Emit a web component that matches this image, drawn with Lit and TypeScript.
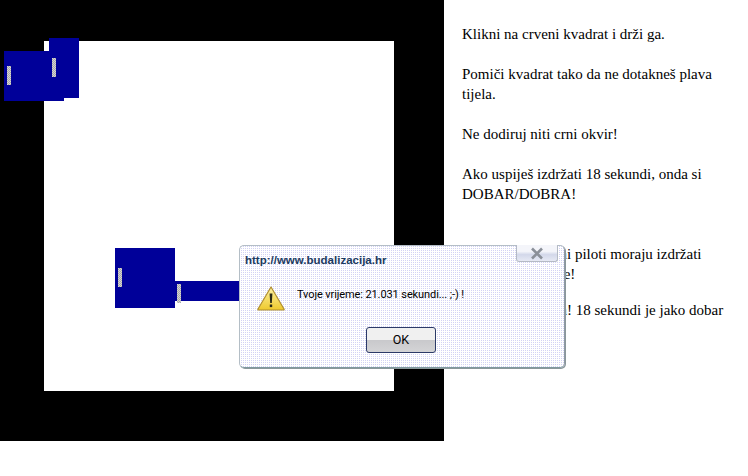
import { LitElement, html, css } from "lit";
import { customElement } from "lit/decorators.js";

@customElement("app-root")
export class AppRoot extends LitElement {
  static styles = css`
    :host { display: block; width: 748px; height: 476px; background: #fff; overflow: hidden; position: relative; }
    .page { display: flex; align-items: flex-start; }
    .arena { position: relative; flex: none; width: 350px; height: 350px; background: #fff; border-style: solid; border-color: #000; border-width: 41px 50px 50px 44px; }
    .block { position: absolute; background: #000099; }
    .handle { position: absolute; width: 4px; height: 19px; background: repeating-conic-gradient(#aaa 0 25%, #d4d4d4 0 50%) 0 0 / 2px 2px; }
    .a { left: -40px; top: 10px; width: 60px; height: 50px; }
    .a .handle { left: 3px; top: 15px; }
    .b { left: 5px; top: -3px; width: 30px; height: 60px; }
    .b .handle { left: 3px; top: 20px; }
    .c { left: 71px; top: 207px; width: 60px; height: 60px; }
    .c .handle { left: 3px; top: 20px; }
    .d { left: 131px; top: 240px; width: 80px; height: 20px; }
    .d .handle { left: 2px; top: 3px; }
    .text { margin: 0; padding: 24px 12px 0 18px; width: 274px; box-sizing: content-box; font: 15px/20px "Liberation Serif", serif; color: #000; }
    .text p { margin: 0 0 20px; }
    .text .gap { margin-top: 40px; }
    .text .last { margin-top: -4px; }
    .dialog { position: absolute; left: 239px; top: 245px; width: 326px; height: 123px; box-sizing: border-box; border: 1px solid #b4bec6; border-bottom-color: #7f9a9e; border-right-color: #8f9aa4; border-radius: 5px; box-shadow: 1px 1px 0 #8b979c; background: repeating-conic-gradient(#d2d2f4 0 25%, #fff 0 100%) 0 0 / 2px 2px; display: flex; flex-direction: column; }
    .title { font: bold 11.5px/14px "Liberation Sans", sans-serif; color: #1b3a5e; padding: 7px 0 0 5px; }
    .close { position: absolute; right: 6px; top: -1px; width: 42px; height: 17px; box-sizing: border-box; border: 1px solid #b4bac4; border-top: none; border-radius: 0 0 3px 3px; background: linear-gradient(#f4f5fa 0 40%, #d3d8ea 60%, #e6e9f4 100%); display: flex; align-items: center; justify-content: center; }
    .body { display: flex; align-items: flex-start; gap: 12px; padding: 19px 0 0 17px; }
    .msg { margin-top: 2px; font: 11px/14px Roboto, sans-serif; letter-spacing: -0.1px; color: #000; }
    .actions { display: flex; justify-content: center; padding: 16px 2px 0 0; }
    .ok { width: 70px; height: 26px; box-sizing: border-box; border: 1px solid #2c3a68; border-radius: 3px; background: linear-gradient(#f0f0f0 0 48%, #c9c9cc 52%, #d4d4d6 100%); font: 12.5px/24px Roboto, sans-serif; color: #000; text-align: center; padding: 0; }
  `;

  render() {
    return html`
      <div class="page">
        <div class="arena">
          <div class="block a"><div class="handle"></div></div>
          <div class="block b"><div class="handle"></div></div>
          <div class="block c"><div class="handle"></div></div>
          <div class="block d"><div class="handle"></div></div>
        </div>
        <div class="text">
          <p>Klikni na crveni kvadrat i drži ga.</p>
          <p>Pomiči kvadrat tako da ne dotakneš plava tijela.</p>
          <p>Ne dodiruj niti crni okvir!</p>
          <p>Ako uspiješ izdržati 18 sekundi, onda si DOBAR/DOBRA!</p>
          <p class="gap">Kažu da su i vojni piloti moraju izdržati<br />dvije pune minute!</p>
          <p class="last">Ali, ne brini ništa! 18 sekundi je jako dobar</p>
        </div>
      </div>
      <div class="dialog">
        <div class="title">http://www.budalizacija.hr</div>
        <div class="close">
          <svg width="14" height="13" viewBox="0 0 14 13"><path d="M2 1.5 L12 11.5 M12 1.5 L2 11.5" stroke="#8b9099" stroke-width="2.6" fill="none"/></svg>
        </div>
        <div class="body">
          <svg width="28" height="25" viewBox="0 0 28 25">
            <defs><linearGradient id="w" x1="0" y1="0" x2="0" y2="1"><stop offset="0" stop-color="#fdf2a8"/><stop offset="1" stop-color="#eec92c"/></linearGradient></defs>
            <path d="M14 1 L27 23 Q27.5 24 26.5 24 L1.5 24 Q0.5 24 1 23 Z" fill="url(#w)" stroke="#b08e30" stroke-width="1.2" stroke-linejoin="round"/>
            <path d="M12.6 7.5 L15.4 7.5 L14.8 17 L13.2 17 Z" fill="#2a2a18"/>
            <rect x="12.8" y="18.5" width="2.4" height="2.6" fill="#2a2a18"/>
          </svg>
          <div class="msg">Tvoje vrijeme: 21.031 sekundi... ;-) !</div>
        </div>
        <div class="actions"><button class="ok">OK</button></div>
      </div>
    `;
  }
}
